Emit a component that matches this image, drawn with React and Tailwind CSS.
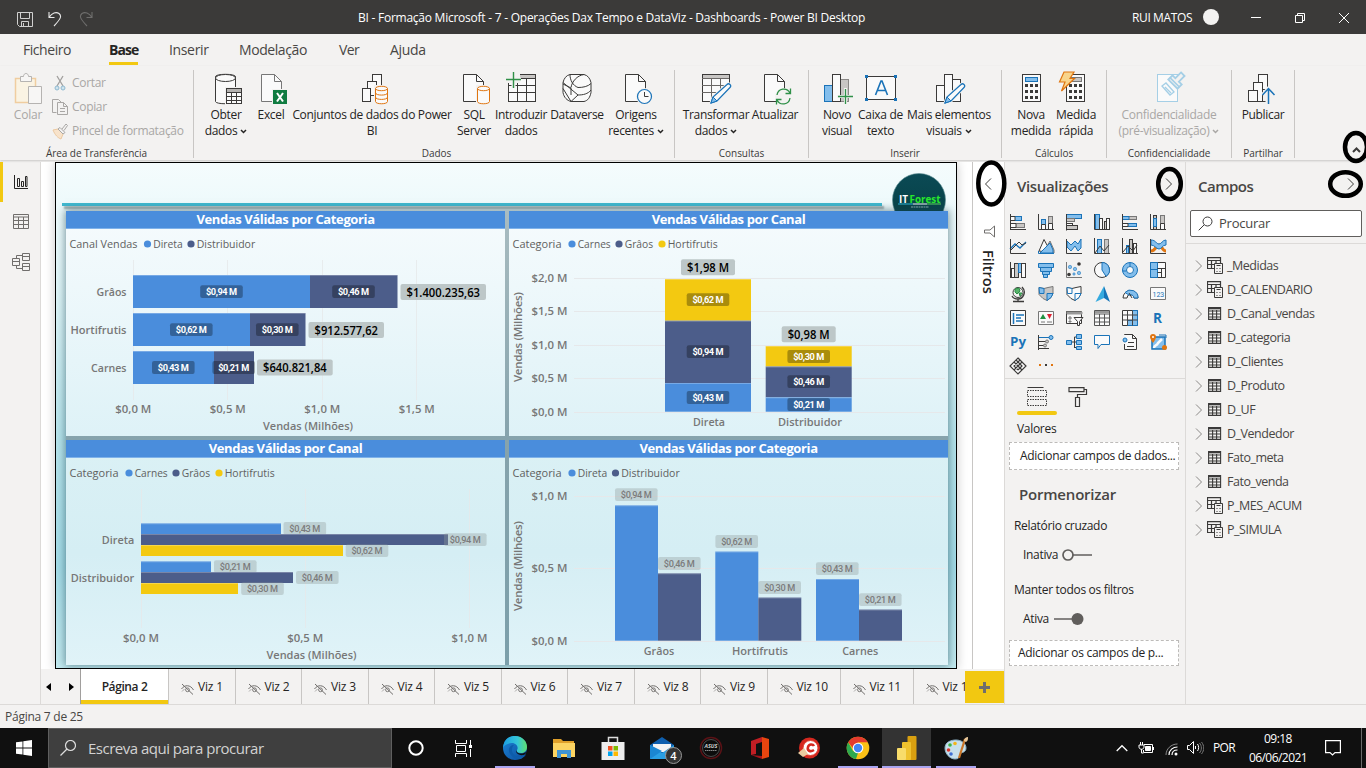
import React from "react";

const K = "#3b3a39";
const B = "#1a73b8";
const L = "#83beec";
const G = "#c8c6c4";
const O = "#e07510";
const W = "#fafafa";

const P = ({ d, s = K, f = "none", w = 1 }) => <path d={d} stroke={s} fill={f} strokeWidth={w} />;
const R = ({ x, y, w, h, s = K, f = "none", sw = 1 }) => (
  <rect x={x + 0.5} y={y + 0.5} width={w} height={h} stroke={s} fill={f} strokeWidth={sw} />
);

/* ---------- Ribbon icons (48 x 38 box) ---------- */
const Big = ({ children }) => (
  <svg width="48" height="38" viewBox="0 0 48 38" className="shrink-0" fill="none">{children}</svg>
);
const Cyl = ({ x, y, w, h, c = O, bands = 0 }) => (
  <g stroke={c} fill={W}>
    <path d={`M${x} ${y + 2}v${h - 4}c0 3 ${w} 3 ${w} 0v-${h - 4}`} />
    {Array.from({ length: bands }, (_, i) => (
      <path key={i} d={`M${x} ${y + 2 + ((i + 1) * (h - 4)) / (bands + 1)}c0 3 ${w} 3 ${w} 0`} fill="none" />
    ))}
    <ellipse cx={x + w / 2} cy={y + 2} rx={w / 2} ry="2.2" />
  </g>
);
const Pencil = ({ x, y }) => (
  <g transform={`translate(${x} ${y})`}>
    <path d="M1 20l2-6L17 1.500c2-2 5 1 3 3L7 18z" fill={W} stroke="#f3f2f1" strokeWidth="3" />
    <path d="M1 20l2-6L17 1.500c2-2 5 1 3 3L7 18z" fill={W} stroke={B} strokeWidth="1.200" />
    <path d="M1 20l2-6 4 4z" fill={L} stroke={B} />
  </g>
);
const Calc = ({ x, top = L, ts = B }) => (
  <g>
    <rect x={x + 0.5} y="4.500" width="18" height="27" fill={W} stroke={K} />
    <rect x={x + 3.5} y="7.500" width="12" height="4" fill={top} stroke={ts} />
    {[14, 20, 26].map((y) => [3, 8, 13].map((dx) => (
      <rect key={y + "-" + dx} x={x + dx} y={y} width="3" height="3" fill={K} />
    )))}
  </g>
);

const ribbonIcons = {
  obter: (
    <Big>
      <Cyl x={13.5} y={4.5} w={20} h={29} c={K} />
      <ellipse cx="23.500" cy="8" rx="10" ry="3.500" fill={W} stroke={K} />
      <rect x="23" y="17" width="19" height="18" fill="#f3f2f1" />
      <R x={24} y={18} w={15} h={15} f={W} />
      <path d="M25 19h14v3H25z" fill="#b5b3b1" />
      <path d="M24 22.500h16M24 26.500h16M24 30.500h16M29.500 22v12M34.500 22v12" stroke={K} />
    </Big>
  ),
  excel: (
    <Big>
      <g stroke="#777"><path d="M14.500 4.500h13l7 7v20h-20z" fill={W} /><path d="M27.500 4.500v7h7" /></g>
      <rect x="25" y="19" width="16" height="16" fill="#f3f2f1" />
      <rect x="26" y="20" width="14" height="14" fill="#107c41" />
      <path d="M30 23l6 8.500M36 23l-6 8.500" stroke="#fff" strokeWidth="2" />
    </Big>
  ),
  conjuntos: (
    <Big>
      <R x={24} y={4} w={9} h={14} f={W} /><R x={19} y={11} w={9} h={14} f={W} /><R x={14} y={18} w={8} h={13} f={W} />
      <rect x="26" y="15" width="15" height="19" fill="#f3f2f1" />
      <Cyl x={27.500} y={16.500} w={12} h={17} bands={2} />
    </Big>
  ),
  sql: (
    <Big>
      <path d="M13.500 4.500h13l7 7v20h-20z" fill={W} stroke={K} /><path d="M26.500 4.500v7h7" stroke={K} />
      <rect x="26" y="15" width="15" height="20" fill="#f3f2f1" />
      <Cyl x={27.500} y={16.500} w={12} h={17} />
    </Big>
  ),
  introduzir: (
    <Big>
      <R x={11} y={4} w={27} h={27} f={W} />
      <path d="M20 5h18v3H20z" fill={G} />
      <path d="M11 8.500h27M11 15.500h27M11 22.500h27M20.500 8v24M29.500 8v24" stroke={K} />
      <path d="M9 3h14v10H9z" fill="#f3f2f1" />
      <path d="M16.500 2v16M9 9.500h15" stroke="#f3f2f1" strokeWidth="4" />
      <path d="M16.500 2v16M9 9.500h15" stroke="#2f9048" strokeWidth="1.400" />
    </Big>
  ),
  dataverse: (
    <Big>
      <path d="M17 4.500h14c4 1 6 4 7 8v10c-1 5-3 8-7 9H18c-4-1-7-4-8-9v-10c1-4 3-7 7-8z" fill={W} stroke={K} />
      <path d="M17 4.500c0 6 3 11 8 13 5 0 10-1 13-4M31 4.500c-7 1-12 7-13 13M10 12.500l15 12.500c5 0 10-1 13-5M10 14l8 4M10 18.500l8 13M18 31.500l7-6.500M18 18v7" stroke={K} />
    </Big>
  ),
  origens: (
    <Big>
      <path d="M13.500 4.500h13l7 7v20h-20z" fill={W} stroke={K} /><path d="M26.500 4.500v7h7" stroke={K} />
      <circle cx="32.500" cy="26.500" r="8.500" fill="#f3f2f1" />
      <circle cx="32.500" cy="26.500" r="7" fill={W} stroke={B} strokeWidth="1.200" />
      <path d="M32.500 22v4.500h4" stroke={K} />
    </Big>
  ),
  transformar: (
    <Big>
      <R x={10} y={4} w={27} h={27} f={W} />
      <path d="M11 5h26v3H11z" fill={G} />
      <path d="M10 8.500h27M10 15.500h27M10 22.500h27M19.500 8v24M28.500 8v24" stroke="#6a6866" />
      <path d="M38.500 16v16H25z" fill="#f3f2f1" />
      <Pencil x={18} y={13} />
    </Big>
  ),
  atualizar: (
    <Big>
      <path d="M13.500 4.500h13l7 7v20h-20z" fill={W} stroke={K} /><path d="M26.500 4.500v7h7" stroke={K} />
      <circle cx="32.500" cy="26.500" r="8.500" fill="#f3f2f1" />
      <path d="M26 25c1-7 10-8 13-2M39 28c-1 7-10 8-13 2M39.500 18.500v5h-5M25.500 34.500v-5h5" stroke="#2f9048" strokeWidth="1.300" />
    </Big>
  ),
  novo: (
    <Big>
      <R x={11} y={15} w={8} h={16} f={L} s={B} /><R x={27} y={9} w={8} h={22} f={G} s="#8a8886" /><R x={19} y={4} w={8} h={27} f={W} />
      <path d="M32.500 18v17M24 26.500h16" stroke="#f3f2f1" strokeWidth="3" />
      <path d="M32.500 19v15M25 26.500h15" stroke="#2f9048" strokeWidth="1.300" />
    </Big>
  ),
  caixa: (
    <Big>
      <R x={9} y={6} w={29} h={23} f={W} />
      <path d="M8 5h3v3H8zM37 5h3v3h-3zM8 28h3v3H8zM37 28h3v3h-3z" fill={B} />
      <path d="M18.500 25l5.500-14h1l5.500 14M20.500 20.500h8" stroke={B} strokeWidth="1.600" />
    </Big>
  ),
  mais: (
    <Big>
      <R x={11} y={15} w={8} h={16} f={W} /><R x={27} y={9} w={8} h={22} f={W} /><R x={19} y={4} w={8} h={27} f={W} />
      <Pencil x={19} y={13} />
    </Big>
  ),
  nova: <Big><Calc x={15} /></Big>,
  medida: (
    <Big>
      <Calc x={14} top={G} ts="#777" />
      <path d="M12 2h10l-4 6.500h4.500L9.500 21l3.500-9H7.500z" fill="#f8d48b" stroke={O} strokeWidth="1.200" />
    </Big>
  ),
  confid: (
    <Big>
      <R x={12} y={4} w={20} h={27} f={W} s="#a5cfe6" />
      <g transform="rotate(45 30 12)" stroke="#a5cfe6" fill="#d5e9f4">
        <path d="M27.500 1h5v8h4v6h-13V9h4z" fill="#f3f2f1" strokeWidth="1.800" /><path d="M23 12.500h14" strokeWidth="1.600" />
      </g>
      <path d="M17 16l4-3 8 9-4 3zM20 17l6 6" stroke="#a5cfe6" fill={W} strokeWidth="1.300" />
    </Big>
  ),
  publicar: (
    <Big>
      <R x={19} y={4} w={9} h={15} f={W} /><R x={14} y={12} w={9} h={19} f={W} /><R x={9} y={20} w={9} h={11} f={W} />
      <path d="M23.500 31.500h3M18.500 31.500h5V18" stroke={K} />
      <path d="M29.500 34V18.500M23.500 25l6-6.500 6 6.500" stroke="#f3f2f1" strokeWidth="4" />
      <path d="M29.500 34V19M23.500 25l6-6.500 6 6.500" stroke={B} strokeWidth="1.500" />
    </Big>
  ),
};

const Caret = () => (
  <svg width="7" height="5" viewBox="0 0 7 5" className="ml-[3px] inline-block align-[1px]" fill="none">
    <path d="M1 1l2.500 2.500L6 1" stroke="currentColor" strokeWidth="1.500" />
  </svg>
);

const Btn = ({ icon, a, b, caret, cls }) => (
  <div className={"flex shrink-0 flex-col items-center whitespace-nowrap text-center text-[12px] leading-4 tracking-[-0.32px] " + cls}>
    {ribbonIcons[icon]}
    <div className="-mt-px">{a}</div>
    <div>{b}{caret && <Caret />}</div>
  </div>
);

const Group = ({ label, cls, children }) => (
  <div className={"flex shrink-0 flex-col justify-between border-r border-[#c8c6c4] " + cls}>
    <div className="flex">{children}</div>
    <div className="-mb-px text-center text-[10px] leading-[12px] tracking-[-0.05px] text-[#3b3a39]">{label}</div>
  </div>
);

const Ribbon = () => (
  <div className="flex h-[94px] shrink-0 pb-[2px] pt-[4px] text-[#252423] shadow-[0_1px_2px_rgba(0,0,0,0.180)]">
    <Group label="Área de Transferência" cls="w-[194px]">
      <div className="flex w-full text-[#a9a7a5]">
        <div className="flex w-[46px] flex-col items-center pl-[10px] text-[12px] leading-4 tracking-[-0.2px]">
          <svg width="28" height="33" viewBox="0 0 28 33" className="mt-[2px]" fill="none">
            <path d="M1.500 6.500h20v24h-20z" fill="#faf3e3" stroke="#f0cda0" strokeWidth="1.500" />
            <path d="M6.500 9.500v-5h3c0-4 5-4 5 0h3v5z" fill="#f7f6f5" stroke="#b5b3b1" />
            <path d="M14.500 14.500h13v17h-13z" fill="#f7f6f5" stroke="#b5b3b1" />
          </svg>
          <div className="mt-[2px]">Colar</div>
        </div>
        <div className="flex flex-col whitespace-nowrap pl-[6px] pt-px text-[12px] tracking-[-0.32px]">
          <div className="flex h-[24px] items-center gap-[4px]">
            <svg width="16" height="17" viewBox="0 0 16 17" fill="none">
              <path d="M5 1l6 10M11 1L5 11" stroke="#a19f9d" strokeWidth="1.300" />
              <circle cx="5" cy="13" r="2" fill="#cfe3ee" stroke="#8fb9d0" /><circle cx="11" cy="13" r="2" fill="#cfe3ee" stroke="#8fb9d0" />
            </svg>
            Cortar
          </div>
          <div className="flex h-[24px] items-center gap-[4px]">
            <svg width="16" height="17" viewBox="0 0 16 17" fill="none">
              <path d="M4.500 13.500h-4V.500h6l3 3M5.500 3.500h6l4 4v8h-10zM11.500 3.500v4h4M8 9.500h5M8 12.500h5" stroke="#a9a7a5" />
            </svg>
            Copiar
          </div>
          <div className="flex h-[24px] items-center gap-[4px]">
            <svg width="16" height="17" viewBox="0 0 16 17" fill="none">
              <path d="M1 7l5-1 5 5-2 5c-3-1-6-4-8-9z" fill="#f8e3cb" stroke="#ecc9a0" />
              <path d="M6 6l2-1.500 5 5L11 11zM10 6l4-5 1.500 1.500L12 7.500" stroke="#a9a7a5" />
            </svg>
            Pincel de formatação
          </div>
        </div>
      </div>
    </Group>
    <Group label="Dados" cls="w-[481px] pl-[5px]">
      <Btn icon="obter" a="Obter" b="dados" caret cls="w-[54px]" />
      <Btn icon="excel" a="Excel" cls="w-[36px]" />
      <Btn icon="conjuntos" a="Conjuntos de dados do Power" b="BI" cls="w-[166px]" />
      <Btn icon="sql" a="SQL" b="Server" cls="w-[38px]" />
      <Btn icon="introduzir" a="Introduzir" b="dados" cls="w-[56px]" />
      <Btn icon="dataverse" a="Dataverse" cls="w-[56px]" />
      <Btn icon="origens" a="Origens" b="recentes" caret cls="w-[62px]" />
    </Group>
    <Group label="Consultas" cls="w-[134px]">
      <Btn icon="transformar" a="Transformar" b="dados" caret cls="ml-[6px] w-[70px]" />
      <Btn icon="atualizar" a="Atualizar" cls="w-[48px]" />
    </Group>
    <Group label="Inserir" cls="w-[193px]">
      <Btn icon="novo" a="Novo" b="visual" cls="ml-[11px] w-[34px]" />
      <Btn icon="caixa" a="Caixa de" b="texto" cls="ml-[4px] w-[45px]" />
      <Btn icon="mais" a="Mais elementos" b="visuais" caret cls="ml-px w-[90px]" />
    </Group>
    <Group label="Cálculos" cls="w-[105px]">
      <Btn icon="nova" a="Nova" b="medida" cls="ml-[7px] w-[44px]" />
      <Btn icon="medida" a="Medida" b="rápida" cls="w-[46px]" />
    </Group>
    <Group label="Confidencialidade" cls="w-[125px]">
      <Btn icon="confid" a="Confidencialidade" b="(pré-visualização)" caret cls="w-[124px] text-[#a9a7a5]" />
    </Group>
    <Group label="Partilhar" cls="w-[63px]">
      <Btn icon="publicar" a="Publicar" cls="w-[62px]" />
    </Group>
    <div className="flex flex-1 items-end justify-end pb-[5px] pr-[5px]">
      <svg width="9" height="6" viewBox="0 0 9 6" fill="none"><path d="M1 5l3.500-3.500L8 5" stroke={K} strokeWidth="2" /></svg>
    </div>
  </div>
);

/* ---------- Charts ---------- */
const BLUE = "#4a8ddc";
const NAVY = "#4c5d8a";
const YELLOW = "#f3c911";

const T = ({ x, y, w, a = "start", c = "#777777", b = 600, size = 11.5, children }) => (
  <text x={x} y={y} textLength={w} textAnchor={a} fill={c} fontWeight={b} fontSize={size} lengthAdjust="spacingAndGlyphs">{children}</text>
);
const Bar = ({ x, y, x2, y2, c }) => (
  <g><rect x={x} y={y} width={x2 - x} height={y2 - y} fill={c} /><path d={`M${x} ${y + 0.5}H${x2}`} stroke="#fff" strokeOpacity="0.250" /></g>
);
const Chip = ({ cx, cy, dark, children }) => (
  <g>
    <rect x={cx - 21.3} y={cy - 6.4} width="42.600" height="12.800" rx="2" fill={dark ? "#000" : "#8f9c9c"} fillOpacity={dark ? 0.3 : 0.36} />
    <text x={cx - 15.5} y={cy + 3.4} textLength="31" fontFamily="Roboto" fontWeight={dark ? 700 : 500} fontSize="9.200" fill={dark ? "#fff" : "#7b7b7b"}>{children}</text>
  </g>
);
const Total = ({ x, y, w, children }) => (
  <g>
    <rect x={x} y={y} width={w} height="16" rx="2" fill="#bdc7c8" />
    <T x={x + 6} y={y + 12.7} w={w - 12} c="#000" size={12}>{children}</T>
  </g>
);
const Legend = ({ y, title, tw, x, items }) => (
  <g>
    <T x={x} y={y + 4.3} w={tw} c="#606060" b={400}>{title}</T>
    {items.map(([dx, label, w, c]) => (
      <g key={label}><circle cx={dx} cy={y} r="3.600" fill={c} /><T x={dx + 5.7} y={y + 4.3} w={w} c="#606060" b={400}>{label}</T></g>
    ))}
  </g>
);
const YTitle = ({ y }) => (
  <text transform={`translate(522 ${y}) rotate(-90)`} textAnchor="middle" textLength="90" fontWeight="600" fontSize="11.500" fill="#777">Vendas (Milhões)</text>
);
const VGrid = ({ xs, y1, y2 }) => <path d={xs.map((x) => `M${x} ${y1}V${y2}`).join("")} stroke="#e6e8ea" strokeOpacity="0.800" />;
const HGrid = ({ ys }) => <path d={ys.map((y) => `M574 ${y}H945`).join("")} stroke="#e6e8ea" />;

const Card = ({ title, cls, vb, children }) => (
  <section className={"flex flex-col overflow-hidden " + cls}>
    <h3 className="flex h-[18px] shrink-0 items-center justify-center border-b border-[#7fb2ea] bg-[#4a8ddc] text-[13px] font-bold leading-none tracking-[-0.38px] text-white">{title}</h3>
    <svg viewBox={vb} width="439" height="207" className="block">{children}</svg>
  </section>
);

const ChartA = () => (
  <Card title="Vendas Válidas por Categoria" cls="bg-gradient-to-b from-[#f6fbfd] to-[#def2f7]" vb="66 229 439 207">
    <Legend x={69.5} y={244} title="Canal Vendas" tw={68} items={[[147.5, "Direta", 29.5, BLUE], [191, "Distribuidor", 58.5, NAVY]]} />
    <VGrid xs={[133.5, 227.5, 322.5, 416.5]} y1={260} y2={400} />
    {[
      ["Grâos", 30, 275, 310, 397.5], ["Hortifrutis", 56, 313, 250, 305.5], ["Carnes", 35.5, 351, 214, 254],
    ].map(([n, w, y, a, b]) => (
      <g key={n}><T x={126.5} y={y + 20.7} w={w} a="end">{n}</T><Bar x={133} x2={a} y={y} y2={y + 33} c={BLUE} /><Bar x={a} x2={b} y={y} y2={y + 33} c={NAVY} /></g>
    ))}
    <Chip dark cx={221.500} cy={291.700}>$0,94 M</Chip><Chip dark cx={353.500} cy={291.700}>$0,46 M</Chip>
    <Chip dark cx={191.300} cy={329.700}>$0,62 M</Chip><Chip dark cx={277.300} cy={329.700}>$0,30 M</Chip>
    <Chip dark cx={173.300} cy={367.500}>$0,43 M</Chip><Chip dark cx={233.700} cy={367.500}>$0,21 M</Chip>
    <Total x={400.500} y={284} w={85.500}>$1.400.235,63</Total>
    <Total x={308.500} y={322} w={75.500}>$912.577,62</Total>
    <Total x={257} y={359.500} w={75.700}>$640.821,84</Total>
    {["$0,0 M", "$0,5 M", "$1,0 M", "$1,5 M"].map((t, i) => <T key={t} x={133.3 + i * 94.5} y={413} w={36} a="middle">{t}</T>)}
    <T x={263} y={430} w={90}>Vendas (Milhões)</T>
  </Card>
);

const ChartB = () => (
  <Card title="Vendas Válidas por Canal" cls="bg-gradient-to-b from-[#f6fbfd] to-[#def2f7]" vb="509 229 439 207">
    <Legend x={512.5} y={244} title="Categoria" tw={49} items={[[572, "Carnes", 33, BLUE], [619, "Grâos", 28.5, NAVY], [662, "Hortifrutis", 50, YELLOW]]} />
    <HGrid ys={[278.5, 311.5, 345.5, 378.5, 412.5]} />
    {["$2,0 M", "$1,5 M", "$1,0 M", "$0,5 M", "$0,0 M"].map((t, i) => <T key={t} x={567.5} y={282 + i * 33.4} w={36} a="end">{t}</T>)}
    <YTitle y={337} />
    <Bar x={665} x2={751} y={279} y2={320.700} c={YELLOW} /><Bar x={665} x2={751} y={320.700} y2={383} c={NAVY} /><Bar x={665} x2={751} y={383} y2={411.700} c={BLUE} />
    <Bar x={765.700} x2={851.700} y={346} y2={366.500} c={YELLOW} /><Bar x={765.700} x2={851.700} y={366.500} y2={397.300} c={NAVY} /><Bar x={765.700} x2={851.700} y={397.300} y2={411.700} c={BLUE} />
    <Chip dark cx={708} cy={299.700}>$0,62 M</Chip><Chip dark cx={708} cy={351.700}>$0,94 M</Chip><Chip dark cx={708} cy={397.500}>$0,43 M</Chip>
    <Chip dark cx={808.700} cy={356.500}>$0,30 M</Chip><Chip dark cx={808.700} cy={381.700}>$0,46 M</Chip><Chip dark cx={808.700} cy={404.500}>$0,21 M</Chip>
    <Total x={681} y={259.300} w={54}>$1,98 M</Total><Total x={781.700} y={326.300} w={54}>$0,98 M</Total>
    <T x={709} y={426} w={32} a="middle">Direta</T><T x={810} y={426} w={64} a="middle">Distribuidor</T>
  </Card>
);

const ChartC = () => (
  <Card title="Vendas Válidas por Canal" cls="bg-gradient-to-b from-[#dbf1f5] via-[#d5eef4] to-[#e0f3f8]" vb="66 458 439 207">
    <Legend x={69.5} y={473} title="Categoria" tw={49} items={[[129, "Carnes", 33, BLUE], [176, "Grâos", 28.5, NAVY], [219, "Hortifrutis", 50, YELLOW]]} />
    <VGrid xs={[141.500, 305.500, 469.500]} y1={489} y2={628} />
    <Chip cx={304.800} cy={528.500}>$0,43 M</Chip><Chip cx={235.300} cy={566.700}>$0,21 M</Chip>
    {[[523.3, BLUE, 281], [534, NAVY, 448], [545, YELLOW, 343], [561.3, BLUE, 211], [572, NAVY, 293], [583, YELLOW, 238]].map(([y, c, x2]) => (
      <Bar key={y} x={141} x2={x2} y={y} y2={y + 11} c={c} />
    ))}
    <Chip cx={465.300} cy={539.700}>$0,94 M</Chip><Chip cx={367} cy={550.700}>$0,62 M</Chip>
    <Chip cx={317.300} cy={577.500}>$0,46 M</Chip><Chip cx={262.500} cy={588.700}>$0,30 M</Chip>
    <T x={134.300} y={544} w={32.500} a="end">Direta</T><T x={134.300} y={582} w={63.500} a="end">Distribuidor</T>
    {["$0,0 M", "$0,5 M", "$1,0 M"].map((t, i) => <T key={t} x={141 + i * 164.2} y={642} w={36} a="middle">{t}</T>)}
    <T x={266.500} y={659} w={90}>Vendas (Milhões)</T>
  </Card>
);

const ChartD = () => (
  <Card title="Vendas Válidas por Categoria" cls="bg-gradient-to-b from-[#dbf1f5] via-[#d5eef4] to-[#e0f3f8]" vb="509 458 439 207">
    <Legend x={512.5} y={473} title="Categoria" tw={49} items={[[572, "Direta", 29.5, BLUE], [615.5, "Distribuidor", 58.5, NAVY]]} />
    <HGrid ys={[496.500, 568.500, 641.500]} />
    {["$1,0 M", "$0,5 M", "$0,0 M"].map((t, i) => <T key={t} x={567.5} y={500 + i * 72.4} w={36} a="end">{t}</T>)}
    <YTitle y={566} />
    {[[615, 505.3, BLUE], [658, 573.3, NAVY], [715.3, 551.5, BLUE], [758.3, 597.5, NAVY], [816, 579, BLUE], [859, 609.5, NAVY]].map(([x, y, c]) => (
      <Bar key={x} x={x} x2={x + 43} y={y} y2={640.700} c={c} />
    ))}
    <Chip cx={636.300} cy={494.700}>$0,94 M</Chip><Chip cx={679.300} cy={563.500}>$0,46 M</Chip>
    <Chip cx={736.700} cy={541.500}>$0,62 M</Chip><Chip cx={779.700} cy={587.500}>$0,30 M</Chip>
    <Chip cx={837.300} cy={568.700}>$0,43 M</Chip><Chip cx={880.300} cy={599.700}>$0,21 M</Chip>
    <T x={659} y={655} w={30.500} a="middle">Grâos</T><T x={760} y={655} w={56} a="middle">Hortifrutis</T><T x={860.300} y={655} w={36} a="middle">Carnes</T>
  </Card>
);

const Report = () => (
  <div className="flex h-[507px] w-[902px] shrink-0 flex-col overflow-hidden border border-black bg-[linear-gradient(180deg,#f5fcfd_0%,#dff5f8_25%,#b5e3eb_55%,#a3dbe7_80%,#c3eaf0_100%)] shadow-[0_0_10px_rgba(0,0,0,0.220)]">
    <div className="flex h-[48px] shrink-0 items-start justify-between pl-[6px] pr-[10px]">
      <div className="mt-[40px] h-[3px] w-[820px] bg-[#41b8cf] shadow-[2px_3px_2px_rgba(60,80,80,0.450)]" />
      <svg width="54" height="54" viewBox="0 0 54 54" className="mt-[10px] shrink-0">
        <defs><linearGradient id="logo" x2="0" y2="1"><stop stopColor="#0b4a55" /><stop offset="1" stopColor="#063f43" /></linearGradient></defs>
        <circle cx="27" cy="27" r="26.500" fill="url(#logo)" stroke="#5d8d92" strokeWidth="0.600" />
        <text x="7" y="29.500" fontSize="11" fontWeight="700" fill="#fff" textLength="9" lengthAdjust="spacingAndGlyphs">IT</text>
        <text x="17.500" y="29.500" fontSize="11" fontWeight="700" fill="#27e82c" textLength="31" lengthAdjust="spacingAndGlyphs">Forest</text>
        <path d="M6 31h15" stroke="#2fb5d8" /><path d="M21 31h14" stroke="#fff" /><path d="M35 31h14" stroke="#5fd85f" />
        <path d="M19 34h18" stroke="#b5cfd0" strokeWidth="0.800" strokeDasharray="2 0.500" />
      </svg>
    </div>
    <div className="relative ml-[10px] grid w-[882px] grid-cols-[439px_439px] grid-rows-[225px_225px] gap-[4px] bg-gradient-to-b from-[#a9bcc1] via-[#86a3ac] to-[#7c9faa] shadow-[0_0_8px_1px_rgba(30,70,80,0.550)]">
      <ChartA /><ChartB /><ChartC /><ChartD />
    </div>
  </div>
);

/* ---------- Visualization gallery ---------- */
const V = [
  <><R x={1} y={2} w={10} h={4} f={L} s={B} /><P d="M1 2.500h4v4H1" f={W} /><R x={1} y={9} w={13} h={4} f={G} s="#777" /><P d="M1 9.500h5v4H1" f={W} /><P d="M.5 0v16M0 15.500h16" /></>,
  <><R x={3} y={5} w={4} h={10} f={L} s={B} /><P d="M3.500 10.500h4v5h-4z" f={W} /><R x={10} y={2} w={4} h={13} f={G} s="#777" /><P d="M10.500 9.500h4v6h-4z" f={W} /><P d="M.5 0v15.500H16" /></>,
  <><R x={0} y={0} w={15} h={4} f={L} s={B} /><R x={0} y={4} w={8} h={3} f={G} s="#777" /><R x={0} y={9} w={6} h={2} f={W} /><R x={0} y={11} w={11} h={4} f={G} /><P d="M.5 0v16.500" /></>,
  <><R x={1} y={0} w={4} h={15} f={L} s={B} /><R x={5} y={4} w={3} h={11} f={W} /><R x={10} y={7} w={2} h={8} f={G} /><R x={12} y={4} w={3} h={11} f={W} /><P d="M.5 0v15.500H16" /></>,
  <><R x={1} y={2} w={13} h={3} f={G} s="#777" /><P d="M1 2.500h6v3H1" f={L} s={B} /><R x={1} y={9} w={13} h={3} f={L} s={B} /><P d="M1 9.500h5v3H1" f={W} /><P d="M.5 0v15.500H16" /></>,
  <><R x={3} y={1} w={3} h={14} f={G} /><P d="M3.500 4.500h3v8h-3z" f={L} s={B} /><R x={10} y={1} w={4} h={14} f={G} s="#777" /><P d="M10.500 9.500h4v6h-4z" f={W} /><P d="M.5 0v15.500H16" /></>,
  <><P d="M0 11l5-5 5 4 6-6" s={B} w={1.4} /><P d="M0 13l5-5 4-4 3 3 4-2" /><P d="M.5 1v14.500H16" /></>,
  <><P d="M5 15l7-12 4 9v3H5z" f={G} s="#777" /><P d="M1 13L6 1.500l7 13z" f={W} /><P d="M2 15l10-10 3 7v3z" f={L} s={B} /><P d="M.5 13v2.500H16" s={B} /></>,
  <><P d="M1 3l4 4 4-4 3 3 3-5v9l-3 3-3-5-4 5-4-4z" f={L} s={B} /><P d="M.5 1v14.500H16" /></>,
  <><R x={3} y={1} w={4} h={14} f={L} s={B} /><R x={10} y={1} w={4} h={14} f={G} s="#777" /><P d="M.5 0v15.500H16M1 15l5-7 4 5 5-6" /></>,
  <><R x={4} y={7} w={2} h={8} f={L} s={B} /><R x={7} y={1} w={3} h={14} f={G} /><R x={11} y={5} w={3} h={10} f={W} /><P d="M.5 0v15.500H16M1 14l5-6 5 5 4-6" /></>,
  <><P d="M1 13c5 0 5-6 8-6s3 6 7 6" s={O} w={3} /><P d="M1 2c5 0 5 4 8 4s3-4 7-4v5c-4 0-4 4-7 4S5 7 1 7z" f={L} s={B} /><P d="M.5 1v14.500H16" /></>,
  <><R x={1} y={6} w={3} h={9} f={W} /><R x={4} y={1} w={4} h={14} f={G} /><R x={8} y={1} w={3} h={9} f={L} s={B} /><R x={11} y={1} w={4} h={14} f={W} /><P d="M.5 0v16" /></>,
  <><P d="M.5 1.500h15v4h-15z" f={L} s={B} /><P d="M2.500 5.500h11v4h-11z" f={L} s={B} /><P d="M4.500 9.500h7v3h-7zM5.500 12.500h4v3h-4z" f={L} s={B} /></>,
  <><g fill={K}><circle cx="13" cy="2" r="1.800" /><circle cx="3" cy="12.500" r="1.800" /></g><g fill={L} stroke={B} strokeWidth=".5"><circle cx="4" cy="5" r="1.700" /><circle cx="9" cy="7" r="1.700" /><circle cx="13" cy="11" r="1.700" /><circle cx="8" cy="12" r="1.200" /></g><P d="M.5 0v15.500H16" s="#777" /></>,
  <><circle cx="8" cy="8" r="7.500" fill={W} stroke={K} /><P d="M8 .5a7.500 7.500 0 0 1 4 13.800L8 8z" f={L} s={B} /></>,
  <><circle cx="8" cy="8" r="5.500" stroke={L} strokeWidth="4" fill={W} /><circle cx="8" cy="8" r="7.500" fill="none" stroke={B} /><circle cx="8" cy="8" r="3.500" fill={W} stroke={B} /><P d="M8 .5v4M.5 9h4" s={B} /></>,
  <><P d="M.5 .5h15v15H.5z" f={W} /><P d="M.5 .5h7v15h-7zM.5 7.500h7" f={L} s={B} /><P d="M7.500 6.500h8M11.500 6.500v9M7.500 10.500h4" /></>,
  <><circle cx="8" cy="6.500" r="5" fill="#f3f2f1" stroke={K} /><P d="M5 3l4-1 1 3-3 3-2-2zM9 7l3 0-2 3z" s="#2f9048" f="#59b36b" /><P d="M12 1c5 5 1 12-4 12-3 0-5-1-6-3M8 13v2M3 15.500h11" w={1.3} /></>,
  <><P d="M1 1.500l5 1 4-1 5-1v7l-2 4-4 3-4-2-4-4z" f={G} s="#777" /><P d="M1 1.500l5 1v5H1.500zM9 7.500h6l-2 4-4 3z" f={L} s={B} /></>,
  <><P d="M1 1.500l5 1 4-1 5-1v7l-2 4-4 3-4-2-4-4z" f={W} /><P d="M1 1.500l5 1v5H1.500zM9 7.500h6l-2 4-4 3z" f={W} s={B} /></>,
  <><path d="M10 0l6 16-6-4z" fill="#1474b8" /><path d="M10 0L1.500 16l8.500-4z" fill="#35aadf" /></>,
  <><P d="M1 12a7.500 7.500 0 0 1 15 0h-4a3.500 3.500 0 0 0-7 0z" f={W} /><P d="M3 6.500A7.500 7.500 0 0 1 16 12h-4a3.500 3.500 0 0 0-5-3z" f={L} s={B} /><P d="M7 7l3 5" /></>,
  <><P d="M.5 1.500h15v12H.5z" f={W} s="#777" /><text x="2.500" y="10.500" fontSize="7" fill={B} fontFamily="Roboto">123</text></>,
  <><P d="M.5 .5h15v15H.5z" f={W} /><P d="M3.500 3v11" s={B} w={1.5} /><P d="M6 5h8M6 8h5M6 11h7" s={B} w={1.5} /></>,
  <><P d="M.5 1.500h15v13H.5z" f={W} s="#777" /><path d="M2 9l3-5 3 5z" fill="#1f9140" /><path d="M9 4h5l-2.500 5z" fill="#d23" /><P d="M3 12h4M9 12h5" s="#777" /></>,
  <><P d="M.5 1.500h15v12H.5z" f={W} /><P d="M1 2h15v2H1z" s="#999" f="#999" /><P d="M3 7h2v2H3zM3 11h2v1H3z" s="#777" /><P d="M8 7.500h9l-3.500 4v4h-2v-4z" f={W} /></>,
  <><P d="M.5 .5h15v15H.5zM.5 4h15M.5 8h15M.5 12h15M5.500 4v12M10.500 4v12" f={W} s="#555" /><P d="M1 2h14" s="#999" w={2} /></>,
  <><P d="M.5 .5h15v15H.5z" f={W} /><P d="M10.500 .5h5v15h-5zM5.500 10.500h5v5h-5z" f={L} s={B} /><P d="M.5 5h15M.5 10h15M5.500 .5v15M10.500 .5v15" s="#444" /></>,
  <text x="3" y="13" fontSize="15" fontWeight="700" fill={B} textLength="9" lengthAdjust="spacingAndGlyphs">R</text>,
  <text x="0" y="12" fontSize="13" fontWeight="700" fill={B} textLength="16" lengthAdjust="spacingAndGlyphs">Py</text>,
  <><P d="M.5 1v15" /><P d="M1 3.500h11M1 11.500h3" s={B} /><circle cx="13" cy="3.500" r="2" fill={L} stroke={B} /><P d="M1 7.500h7M1 11.500h5M1 14.500h10" /><circle cx="9" cy="7.500" r="1.500" fill={G} stroke="#777" /><circle cx="7" cy="11.500" r="1.500" fill={G} stroke="#777" /></>,
  <><P d="M6 8h5M8.500 3v11M8.500 3h3M8.500 13.500h3" /><P d="M.5 6.500h5v4h-5z" f={L} s={B} /><P d="M10.500 .5h5v4h-5zM10.500 6.500h5v4h-5zM10.500 12.500h5v3h-5z" f={L} s={B} /></>,
  <P d="M.5 1.500h15v9H7l-3 4v-4H.5z" f={W} s={B} />,
  <><P d="M2.500 1v-.5h8l4 4v11h-12V10M10.500 .5v4h4M6 8.500h6M5 12.500h7" f={W} /><circle cx="3" cy="6" r="2" fill={L} stroke={B} /></>,
  <><P d="M2 3h13v12H2z" f={L} s={B} w={1.5} /><P d="M4 14c0-3 3-2 4-5l4-4" s={W} w={2.5} /><path d="M0 3a3 3 0 0 1 6 0c0 2-3 6-3 6S0 5 0 3z" fill={O} /><circle cx="3" cy="3" r="1" fill="#fff" /><circle cx="14.500" cy="13.500" r="2.500" fill={O} /><P d="M9 1h7v3" s={B} /></>,
  <><path d="M8 0l8 8-8 8-8-8z" fill={W} stroke={K} strokeWidth="1.200" /><P d="M4 4l4 4-4 4M12 4L8 8l4 4M8 0v0M8 8l-4-4M8 8l4 4M6 2l6 6-4 4M10 2L4 8l4 4" w={1.2} /></>,
  <g><rect x="1" y="6" width="2" height="2" fill={O} /><rect x="7" y="6" width="2" height="2" fill={K} /><rect x="13" y="6" width="2" height="2" fill={O} /></g>,
];

const Chev = ({ left, c = K, w = 8, h = 12 }) => (
  <svg width={w} height={h} viewBox="0 0 8 12" fill="none" className="shrink-0">
    <path d={left ? "M7 .5L1.500 6 7 11.500" : "M1 .5L6.500 6 1 11.500"} stroke={c} />
  </svg>
);

const VisPane = () => (
  <aside className="flex w-[181px] shrink-0 flex-col border-l border-[#dcdad8]">
    <div className="flex h-[48px] shrink-0 items-center justify-between pl-[12px] pr-[12px]">
      <h2 className="text-[15px] font-semibold tracking-[-0.35px] text-[#484644]">Visualizações</h2>
      <div className="-mt-[5px]"><Chev /></div>
    </div>
    <div className="grid shrink-0 auto-rows-[24px] grid-cols-[repeat(6,28px)] pl-[5px] pt-[4px]">
      {V.map((v, i) => <svg key={i} width="17" height="17" viewBox="0 0 17 17" fill="none" className="overflow-visible">{v}</svg>)}
    </div>
    <div className="-mt-[4px] flex h-[36px] shrink-0 gap-[20px] border-t border-[#dcdad8] pl-[12px]">
      <div className="flex w-[40px] flex-col items-center pt-[8px]">
        <svg width="20" height="20" viewBox="0 0 20 20" fill="none" className="shrink-0">
          <path d="M.5 .5h16" stroke={K} /><path d="M.5 3.500h19v6H.5zM.5 12.500h19v6H.5z" stroke={K} strokeDasharray="1.500 1" />
        </svg>
        <div className="mt-[4px] h-[4px] w-full shrink-0 rounded-full bg-[#f2c811]" />
      </div>
      <svg width="20" height="21" viewBox="0 0 20 21" fill="none" className="-ml-[9px] mt-[8px]">
        <path d="M1 .7h15v4H1zM16 2.500h2.500v5h-9v3M7.500 10.500h4v9h-4z" stroke={K} strokeWidth="1.200" />
      </svg>
    </div>
    <div className="mt-[6px] pl-[12px] text-[12px] leading-[18px] tracking-[-0.3px] text-[#252423]">Valores</div>
    <div className="ml-[4px] mt-[4px] flex h-[28px] w-[170px] shrink-0 items-center whitespace-nowrap border border-dashed border-[#bdbbb9] bg-white pl-[10px] text-[12px] tracking-[-0.3px] text-[#252423]">Adicionar campos de dados...</div>
    <div className="mt-[12px] pl-[14px] text-[15px] font-semibold leading-6 tracking-[-0.2px] text-[#484644]">Pormenorizar</div>
    <div className="mt-[11px] pl-[9px] text-[12px] leading-[18px] tracking-[-0.32px] text-[#252423]">Relatório cruzado</div>
    <div className="mt-[11px] flex items-center gap-[4px] pl-[18px] text-[12px] leading-[18px] tracking-[-0.32px] text-[#252423]">
      Inativa
      <svg width="30" height="12" viewBox="0 0 30 12" fill="none"><path d="M11 6h19" stroke="#605e5c" strokeWidth="1.500" /><circle cx="6" cy="6" r="5" stroke="#605e5c" strokeWidth="1.700" /></svg>
    </div>
    <div className="mt-[17px] pl-[9px] text-[12px] leading-[18px] tracking-[-0.32px] text-[#252423]">Manter todos os filtros</div>
    <div className="mt-[11px] flex items-center gap-[5px] pl-[18px] text-[12px] leading-[18px] tracking-[-0.32px] text-[#252423]">
      Ativa
      <svg width="30" height="12" viewBox="0 0 30 12" fill="none"><path d="M0 6h19" stroke="#605e5c" strokeWidth="1.500" /><circle cx="23.500" cy="6" r="6" fill="#605e5c" /></svg>
    </div>
    <div className="ml-[4px] mt-[12px] flex h-[26px] w-[170px] shrink-0 items-center whitespace-nowrap border border-dashed border-[#bdbbb9] bg-white pl-[8px] text-[12px] tracking-[-0.28px] text-[#252423]">Adicionar os campos de p...</div>
  </aside>
);

const fields = [
  ["_Medidas", 1], ["D_CALENDARIO", 1], ["D_Canal_vendas"], ["D_categoria"], ["D_Clientes"], ["D_Produto"],
  ["D_UF"], ["D_Vendedor"], ["Fato_meta"], ["Fato_venda"], ["P_MES_ACUM", 1], ["P_SIMULA", 1],
];

const FieldsPane = () => (
  <aside className="flex w-[181px] shrink-0 flex-col border-l border-[#dcdad8]">
    <div className="flex h-[48px] shrink-0 items-center justify-between pl-[12px] pr-[11px]">
      <h2 className="text-[15px] font-semibold tracking-[-0.5px] text-[#484644]">Campos</h2>
      <div className="-mt-[5px]"><Chev /></div>
    </div>
    <div className="ml-[4px] flex h-[27px] w-[172px] shrink-0 items-center gap-[6px] rounded-[2px] border border-[#605e5c] bg-white pl-[7px] text-[13px] tracking-[-0.25px] text-[#484644]">
      <svg width="15" height="15" viewBox="0 0 15 15" fill="none"><circle cx="9.500" cy="5.500" r="4.500" stroke={K} /><path d="M6.200 8.800L.7 14.300" stroke={K} /></svg>
      <span className="pt-px">Procurar</span>
    </div>
    <div className="mt-[6px] border-t border-[#dcdad8] pt-[10px]">
      {fields.map(([n, calc]) => (
        <div key={n} className="flex h-[24px] items-center pl-[9px] text-[12.500px] tracking-[-0.48px] text-[#484644]">
          <Chev c="#8a8886" />
          <svg width="16" height="17" viewBox="0 0 16 17" fill="none" className={calc ? "-mt-px ml-[4px]" : "-mt-px ml-[5px]"}>
            {calc ? (
              <><path d="M.5 .7h13v10.800H.5zM.5 3.500h13M.5 7.500h7M4.500 3.500v8M9 3.500V6" stroke={K} strokeWidth="1.200" /><path d="M7.500 6.500h8v10h-8z" fill="#f3f2f1" stroke={K} /><path d="M9.500 8.500h4M9.500 11.500h1M12.500 11.500h1M9.500 14.500h1M12.500 14.500h1" stroke={K} /></>
            ) : (
              <><path d="M.6 2.600h12v11.800H.6zM.6 6h12M.6 9h12M.6 12h12M4.600 5v9M8.600 5v9" stroke={K} strokeWidth="1.100" /><path d="M0 3.500h13" stroke={K} strokeWidth="1.600" /></>
            )}
          </svg>
          <span className={calc ? "ml-[4px] pt-px" : "ml-[3px] pt-px"}>{n}</span>
        </div>
      ))}
    </div>
  </aside>
);

/* ---------- Page tabs ---------- */
const Hidden = () => (
  <svg width="13" height="12" viewBox="0 0 13 12" fill="none" className="mt-[4px] shrink-0">
    <path d="M.5 6c3-4.500 9-4.500 12 1M1 1l11 10.500" stroke="#706e6c" /><circle cx="6.500" cy="6.800" r="1.900" stroke="#706e6c" strokeWidth="0.900" /><path d="M1 8.500L3.500 6" stroke="#8a8886" strokeWidth="0.700" />
  </svg>
);
const Tabs = () => (
  <div className="flex h-[35px] shrink-0 overflow-hidden">
    <div className="flex w-[40px] shrink-0 items-center justify-between border-r border-[#a19f9d] pl-[5px] pr-[6px]">
      <svg width="5" height="8" viewBox="0 0 5 8"><path d="M5 0v8L0 4z" /></svg>
      <svg width="5" height="8" viewBox="0 0 5 8"><path d="M0 0v8l5-4z" /></svg>
    </div>
    <div className="flex w-[87px] shrink-0 items-center justify-center border-b-[4px] border-[#f2c811] bg-white pt-[5px] text-[12px] font-semibold tracking-[-0.4px] text-[#252423]">Página 2</div>
    <div className="flex w-[797px] shrink-0 overflow-hidden border-l border-[#c8c6c4]">
      {[1, 2, 3, 4, 5, 6, 7, 8, 9, 10, 11, 12].map((n) => (
        <div key={n} className={"flex shrink-0 items-center gap-[4px] border-r border-[#c8c6c4] pl-[12px] text-[12px] tracking-[-0.2px] text-[#252423] " + (n > 9 ? "w-[73px]" : "w-[66.500px]")}>
          <Hidden />Viz {n}
        </div>
      ))}
    </div>
    <div className="mb-px mt-[2px] flex w-[39px] shrink-0 items-center justify-center bg-[#f2c811]">
      <svg width="11" height="11" viewBox="0 0 11 11"><path d="M4 0h3v4h4v3H7v4H4V7H0V4h4z" fill="#706e6c" /></svg>
    </div>
  </div>
);

/* ---------- Taskbar ---------- */
const Slot = ({ children, line, active }) => (
  <div className={"flex h-full w-[49px] shrink-0 flex-col items-center justify-between pt-[8px] " + (active ? "bg-[#333333]" : "")}>
    <svg width="28" height="25" viewBox="0 0 28 25" fill="none">{children}</svg>
    {line ? <div className={"h-[2px] bg-[#a9a4f0] " + (active ? "w-[49px]" : "w-[40px]")} /> : null}
  </div>
);
const Taskbar = () => (
  <footer className="flex h-[40px] shrink-0 bg-[#101010] text-white">
    <div className="flex w-[48px] items-center justify-center">
      <svg width="16" height="16" viewBox="0 0 16 16" fill="#fff"><path d="M0 2.300L6.500 1.400v6.200H0zM7.300 1.300L16 0v7.600H7.300zM0 8.400h6.500v6.200L0 13.700zM7.300 8.400H16V16l-8.700-1.300z" /></svg>
    </div>
    <div className="flex w-[344px] items-center gap-[12px] border border-[#5f5f5f] bg-[#3f3f3f] pl-[11px] text-[15px] tracking-[-0.5px] text-[#d2d2d2]">
      <svg width="16" height="16" viewBox="0 0 16 16" fill="none"><circle cx="10.500" cy="5.500" r="5" stroke="#ddd" strokeWidth="1.200" /><path d="M7 9L.5 15.500" stroke="#ddd" strokeWidth="1.200" /></svg>
      Escreva aqui para procurar
    </div>
    <div className="flex w-[48px] items-center justify-center"><svg width="16" height="16" viewBox="0 0 16 16"><circle cx="8" cy="8" r="6.700" fill="none" stroke="#fff" strokeWidth="2" /></svg></div>
    <div className="flex w-[50px] items-center justify-center pr-[3px]">
      <svg width="17" height="17" viewBox="0 0 17 17" fill="none" stroke="#fff"><path d="M.5 0v3.500h11V0M1.500 5.500h9v6h-9zM.5 17v-3.500h11V17M15.500 0v5M15.500 9v8" /><path d="M14 5h3v3h-3z" fill="#fff" stroke="none" /></svg>
    </div>
    <Slot line>
      <defs>
        <linearGradient id="e1" x2="1" y2="0"><stop stopColor="#1b9de2" /><stop offset=".6" stopColor="#35c6d8" /><stop offset="1" stopColor="#5fdf6e" /></linearGradient>
        <linearGradient id="e2" x2="1" y2="1"><stop stopColor="#1d86d8" /><stop offset="1" stopColor="#0b4c9c" /></linearGradient>
      </defs>
      <circle cx="14" cy="12" r="12" fill="url(#e2)" />
      <path d="M2 12C3 3 8 0 14 0c8 0 12 6 12 11 0 4-3 6-6 6-4 0-5-2-4-3 2-3-1-7-5-7-4 0-8 2-9 5z" fill="url(#e1)" />
      <path d="M13 9c-4 4-2 11 5 12 3 0 5-1 7-3l-1 2-4 3c-7 1-13-5-12-10 .5-2 2-4 5-4z" fill="#0d5cab" />
      <path d="M16 14c-1 2 1 3.500 4 3.500 2 0 4-.5 5.500-2-.5 2-1.500 3-3 3.500-5 1-9-3-6.500-5z" fill="#101010" />
    </Slot>
    <Slot>
      <path d="M3 3h8l2 2h11v16H3z" fill="#e0a02a" /><path d="M3 7h22v14H3z" fill="#fcd462" /><path d="M7 14h14v8h-4v-4h-6v4H7z" fill="#3f94d4" />
    </Slot>
    <Slot>
      <path d="M9.500 6V1.500h9V6" stroke="#ddd" strokeWidth="1.500" /><path d="M2.500 6h23v18h-23z" fill="#eee" />
      <path d="M9 10h4.500v4.500H9z" fill="#f25022" /><path d="M14.500 10H19v4.500h-4.500z" fill="#7fba00" /><path d="M9 15.500h4.500V20H9z" fill="#00a4ef" /><path d="M14.500 15.500H19V20h-4.500z" fill="#ffb900" />
    </Slot>
    <div className="relative">
      <Slot><path d="M2 9L14 1l12 8v14H2z" fill="#0f5fae" /><path d="M5 8h18v8H5z" fill="#f4f4f4" /><path d="M2 9l12 8 12-8v14H2z" fill="#2a9fe4" /><path d="M2 23l12-8-12-6z" fill="#1b86d2" /></Slot>
      <div className="absolute left-[28px] top-[19px] flex h-[17px] w-[17px] items-center justify-center rounded-full border border-[#999] bg-[#333] text-[11px] font-semibold leading-none">4</div>
    </div>
    <Slot>
      <circle cx="14" cy="12" r="10.500" fill="#0c0c0c" stroke="#5a1216" strokeWidth="1.500" /><circle cx="14" cy="12" r="8.500" stroke="#777" strokeWidth=".6" />
      <text x="7.500" y="12" fontSize="5" fontWeight="700" fontStyle="italic" fill="#ccc" textLength="13" lengthAdjust="spacingAndGlyphs">ASUS</text><path d="M8 14.500h12" stroke="#888" strokeDasharray="1.500 .5" />
    </Slot>
    <Slot><path d="M5 5l11-4v5l-6 2v10l-5 1z" fill="#c21e24" /><path d="M16 1l7 2v18l-7 2z" fill="#e8450f" /><path d="M5 19l11 1v3z" fill="#a6141b" /></Slot>
    <Slot>
      <circle cx="14.500" cy="12" r="10.500" fill="#d5281f" /><circle cx="15.500" cy="12" r="7.500" fill="#fff" stroke="#e04030" />
      <path d="M19 10c-1-2-5-2.500-6 1s2 5.500 6 3" stroke="#d5281f" strokeWidth="2.600" /><path d="M3 17l6-5 4 6-5 3z" fill="#eacb9f" />
    </Slot>
    <Slot line>
      <circle cx="14" cy="12" r="11.300" fill="#fbc116" /><path d="M4.200 6.300L9 15l5 2-2 6.100A11.300 11.300 0 0 1 4.200 6.300z" fill="#2da94f" />
      <path d="M4.200 6.300A11.300 11.300 0 0 1 23.800 6.300H14l-5 6z" fill="#e33b2e" /><circle cx="14" cy="12" r="5.300" fill="#fff" /><circle cx="14" cy="12" r="4.200" fill="#4285f4" />
    </Slot>
    <Slot line active>
      <rect x="14.500" y="0" width="9" height="24" rx="1" fill="#d9a010" /><rect x="9" y="6" width="9" height="18" rx="1" fill="#efc22e" /><rect x="4" y="12" width="9" height="12" rx="1" fill="#f8dc6a" />
    </Slot>
    <Slot line>
      <path d="M3 12C3 6 9 4 14 4s10 3 10 8-5 4-6 6 0 5-5 5S3 18 3 12z" fill="#c7e0ec" stroke="#8fb5c8" />
      <circle cx="8" cy="9" r="1.800" fill="#3cb44a" /><circle cx="13" cy="7.500" r="1.800" fill="#f3b51b" /><circle cx="6.500" cy="14" r="1.800" fill="#d9342b" /><circle cx="9" cy="18" r="1.800" fill="#3f6fd4" />
      <path d="M23 3l-6 19" stroke="#c8762a" strokeWidth="2.200" /><path d="M22 5c0-3 2-4 4-4 0 2 0 4-2 5z" fill="#e8c79a" />
    </Slot>
    <div className="flex flex-1 items-center justify-end">
      <svg width="12" height="8" viewBox="0 0 12 8" fill="none"><path d="M.7 7L6 1.700 11.300 7" stroke="#fff" strokeWidth="1.300" /></svg>
      <svg width="17" height="14" viewBox="0 0 17 14" fill="none" stroke="#fff" className="ml-[10px]"><path d="M6 3.500h8.500v8H5.500V9M15.500 6v3" /><path d="M7.500 5.500h5v4h-5z" fill="#fff" /><path d="M1 4h5v2c0 3-5 3-5 0zM2.500 1v3M4.500 1v3M3.500 8v4h2" /></svg>
      <svg width="14" height="13" viewBox="0 0 14 13" fill="none" className="ml-[10px] mt-[3px]"><path d="M1 12C1 6 6 1 12.500 1" stroke="#8a8a8a" /><path d="M4 12c0-5 4-8 8.500-8M7 12c0-3 2-5 5.500-5" stroke="#fff" strokeWidth="1.200" /><circle cx="11" cy="11" r="1.500" fill="#fff" /></svg>
      <svg width="17" height="14" viewBox="0 0 17 14" fill="none" stroke="#fff" className="ml-[8px]"><path d="M.5 4.500h2l4-4v12l-4-4h-2zM8.500 5v3" /><path d="M10.500 3c1.500 2 1.500 5 0 7" /><path d="M12.500 2c2.500 3 2.500 7 0 10M14.500 1c3 4 3 8 0 12" stroke="#777" /></svg>
      <span className="ml-[9px] w-[23px] text-[12px] tracking-[-0.6px]">POR</span>
      <div className="ml-[12px] w-[60px] whitespace-nowrap text-center text-[12px] leading-[19px] tracking-[-0.55px]"><div>09:18</div><div>06/06/2021</div></div>
      <svg width="16" height="16" viewBox="0 0 16 16" fill="none" className="ml-[17px]"><path d="M.6 .6h14.800v12H10L7.500 15 5 12.600H.6z" stroke="#fff" strokeWidth="1.200" /></svg>
      <div className="ml-[20px] h-full w-[5px] border-l border-[#6a6a6a]" />
    </div>
  </footer>
);

export default function App() {
  return (
    <div className="relative flex h-[768px] w-[1366px] flex-col overflow-hidden bg-[#f3f2f1] font-['Open_Sans','Noto_Sans',sans-serif]">
      <header className="flex h-[34px] shrink-0 items-center bg-[#3b3a39] text-white">
        <div className="flex w-[358px] items-center gap-[15px] pl-[17px] pt-[6px]">
          <svg width="16" height="16" viewBox="0 0 16 16" fill="none" stroke="#d0d0d0"><path d="M.5 .5h15v14H2.500l-2-2zM3.500 .5v6h9v-6M4.500 14.500v-5h7v5M6.500 11v3" /></svg>
          <svg width="15" height="16" viewBox="0 0 15 16" fill="none" stroke="#e8e8e8" strokeWidth="1.100"><path d="M1 0v5.500h5.500M1 5.500C4 1 8-.5 11 1.500c3 2.500 2 5-5 12.500" /></svg>
          <svg width="15" height="16" viewBox="0 0 15 16" fill="none" stroke="#6e6d6c" strokeWidth="1.100"><path d="M14 0v5.500H8.500M14 5.500C11 1 7-.5 4 1.500 1 4 2 6.500 9 14" /></svg>
        </div>
        <div className="w-[507px] whitespace-nowrap pt-[2px] text-[12px] tracking-[-0.245px]">BI - Formação Microsoft - 7 - Operações Dax Tempo e DataViz - Dashboards - Power BI Desktop</div>
        <div className="flex flex-1 items-center pl-[267px]">
          <span className="w-[60px] whitespace-nowrap pt-px text-[12px] tracking-[-0.38px]">RUI MATOS</span>
          <span className="ml-[11px] h-[16px] w-[16px] rounded-full bg-[#f3f2f1]" />
          <svg width="10" height="2" viewBox="0 0 10 2" className="ml-[32px] mt-[2px]"><path d="M0 .5h10" stroke="#fff" /></svg>
          <svg width="10" height="10" viewBox="0 0 10 10" fill="none" stroke="#fff" className="ml-[34px] mt-[2px]"><path d="M.5 2.500h7v7h-7zM2.500 2.500v-2h7v7h-2" /></svg>
          <svg width="10" height="10" viewBox="0 0 10 10" fill="none" stroke="#fff" className="ml-[34px] mt-[2px]"><path d="M0 0l10 10M10 0L0 10" /></svg>
        </div>
      </header>
      <nav className="flex h-[32px] shrink-0 items-start pl-[23px] text-[14px] leading-[20px] text-[#484644]">
        <span className="w-[86px] pt-[6px] tracking-[-0.45px]">Ficheiro</span>
        <span className="mr-[31px] flex h-[31px] w-[29px] flex-col justify-between pt-[6px] font-bold tracking-[-0.9px] text-[#252423]">Base<i className="block h-[3px] w-[29px] shrink-0 bg-[#f2c811]" /></span>
        <span className="w-[70px] pt-[6px] tracking-[-0.35px]">Inserir</span>
        <span className="w-[100px] pt-[6px] tracking-[-0.42px]">Modelação</span>
        <span className="w-[51px] pt-[6px] tracking-[-0.6px]">Ver</span>
        <span className="pt-[6px] tracking-[-0.3px]">Ajuda</span>
      </nav>
      <Ribbon />
      <div className="flex min-h-0 flex-1 pt-[2px]">
        <div className="flex min-w-0 flex-1">
          <aside className="flex w-[41px] shrink-0 flex-col border-r border-[#dcdad8]">
            <div className="flex h-[40px] items-center justify-center border-l-[3px] border-[#f2c811] pr-[2px]">
              <svg width="14" height="14" viewBox="0 0 14 14" fill="none" stroke="#252423"><path d="M.5 0v13.500H14M3.500 3.500h2v8h-2zM7.500 6.500h2v5h-2zM11.500 1.500h1.500v10h-1.500z" /></svg>
            </div>
            <div className="flex h-[40px] items-center justify-center pb-[2px] pl-[2px]">
              <svg width="16" height="15" viewBox="0 0 16 15" fill="none" stroke="#706e6c"><path d="M.5 .5h15v14H.5zM.5 3h15M.5 6.500h15M.5 10.500h15M5.500 3v12M10.500 3v12" /></svg>
            </div>
            <div className="flex h-[40px] items-center justify-center pl-[2px]">
              <svg width="18" height="18" viewBox="0 0 18 18" fill="none" stroke="#706e6c"><path d="M.5 5.500h7v7h-7zM.5 8.500h7M10.500 .5h7v7h-7zM10.500 3.500h7M10.500 10.500h7v7h-7zM10.500 13.500h7M4.500 5V2.500h6M4.500 13v2.500h6" /></svg>
            </div>
          </aside>
          <main className="flex min-w-0 flex-1 flex-col">
            <div className="flex h-[507px] shrink-0 bg-white">
              <div className="flex w-[931px] shrink-0 overflow-hidden pl-[14px]"><Report /></div>
              <div className="flex flex-1 flex-col items-center border-l border-[#c8c6c4] pr-[2px] pt-[16px]">
                <Chev left />
                <svg width="13" height="13" viewBox="0 0 13 13" fill="none" className="ml-[4px] mt-[35px]"><path d="M11.500 1v11L7 8H1.500V5H7z" stroke="#706e6c" /></svg>
                <div className="mt-[12px] text-[14.500px] font-semibold leading-[16px] text-[#252423] [writing-mode:vertical-rl]">Filtros</div>
              </div>
            </div>
            <Tabs />
          </main>
        </div>
        <VisPane />
        <FieldsPane />
      </div>
      <div className="flex h-[24px] shrink-0 items-center border-t border-[#dcdad8] pl-[5px] text-[12px] tracking-[-0.25px] text-[#484644]">Página 7 de 25</div>
      <Taskbar />
      <svg width="1366" height="768" viewBox="0 0 1366 768" fill="none" stroke="#000" strokeWidth="4.500" className="pointer-events-none absolute left-0 top-0">
        <ellipse cx="991.300" cy="183.500" rx="13" ry="21" /><ellipse cx="1169.500" cy="184" rx="11.300" ry="15" />
        <ellipse cx="1345.500" cy="184" rx="15.300" ry="11.800" /><ellipse cx="1356" cy="147" rx="11" ry="14" />
      </svg>
    </div>
  );
}
